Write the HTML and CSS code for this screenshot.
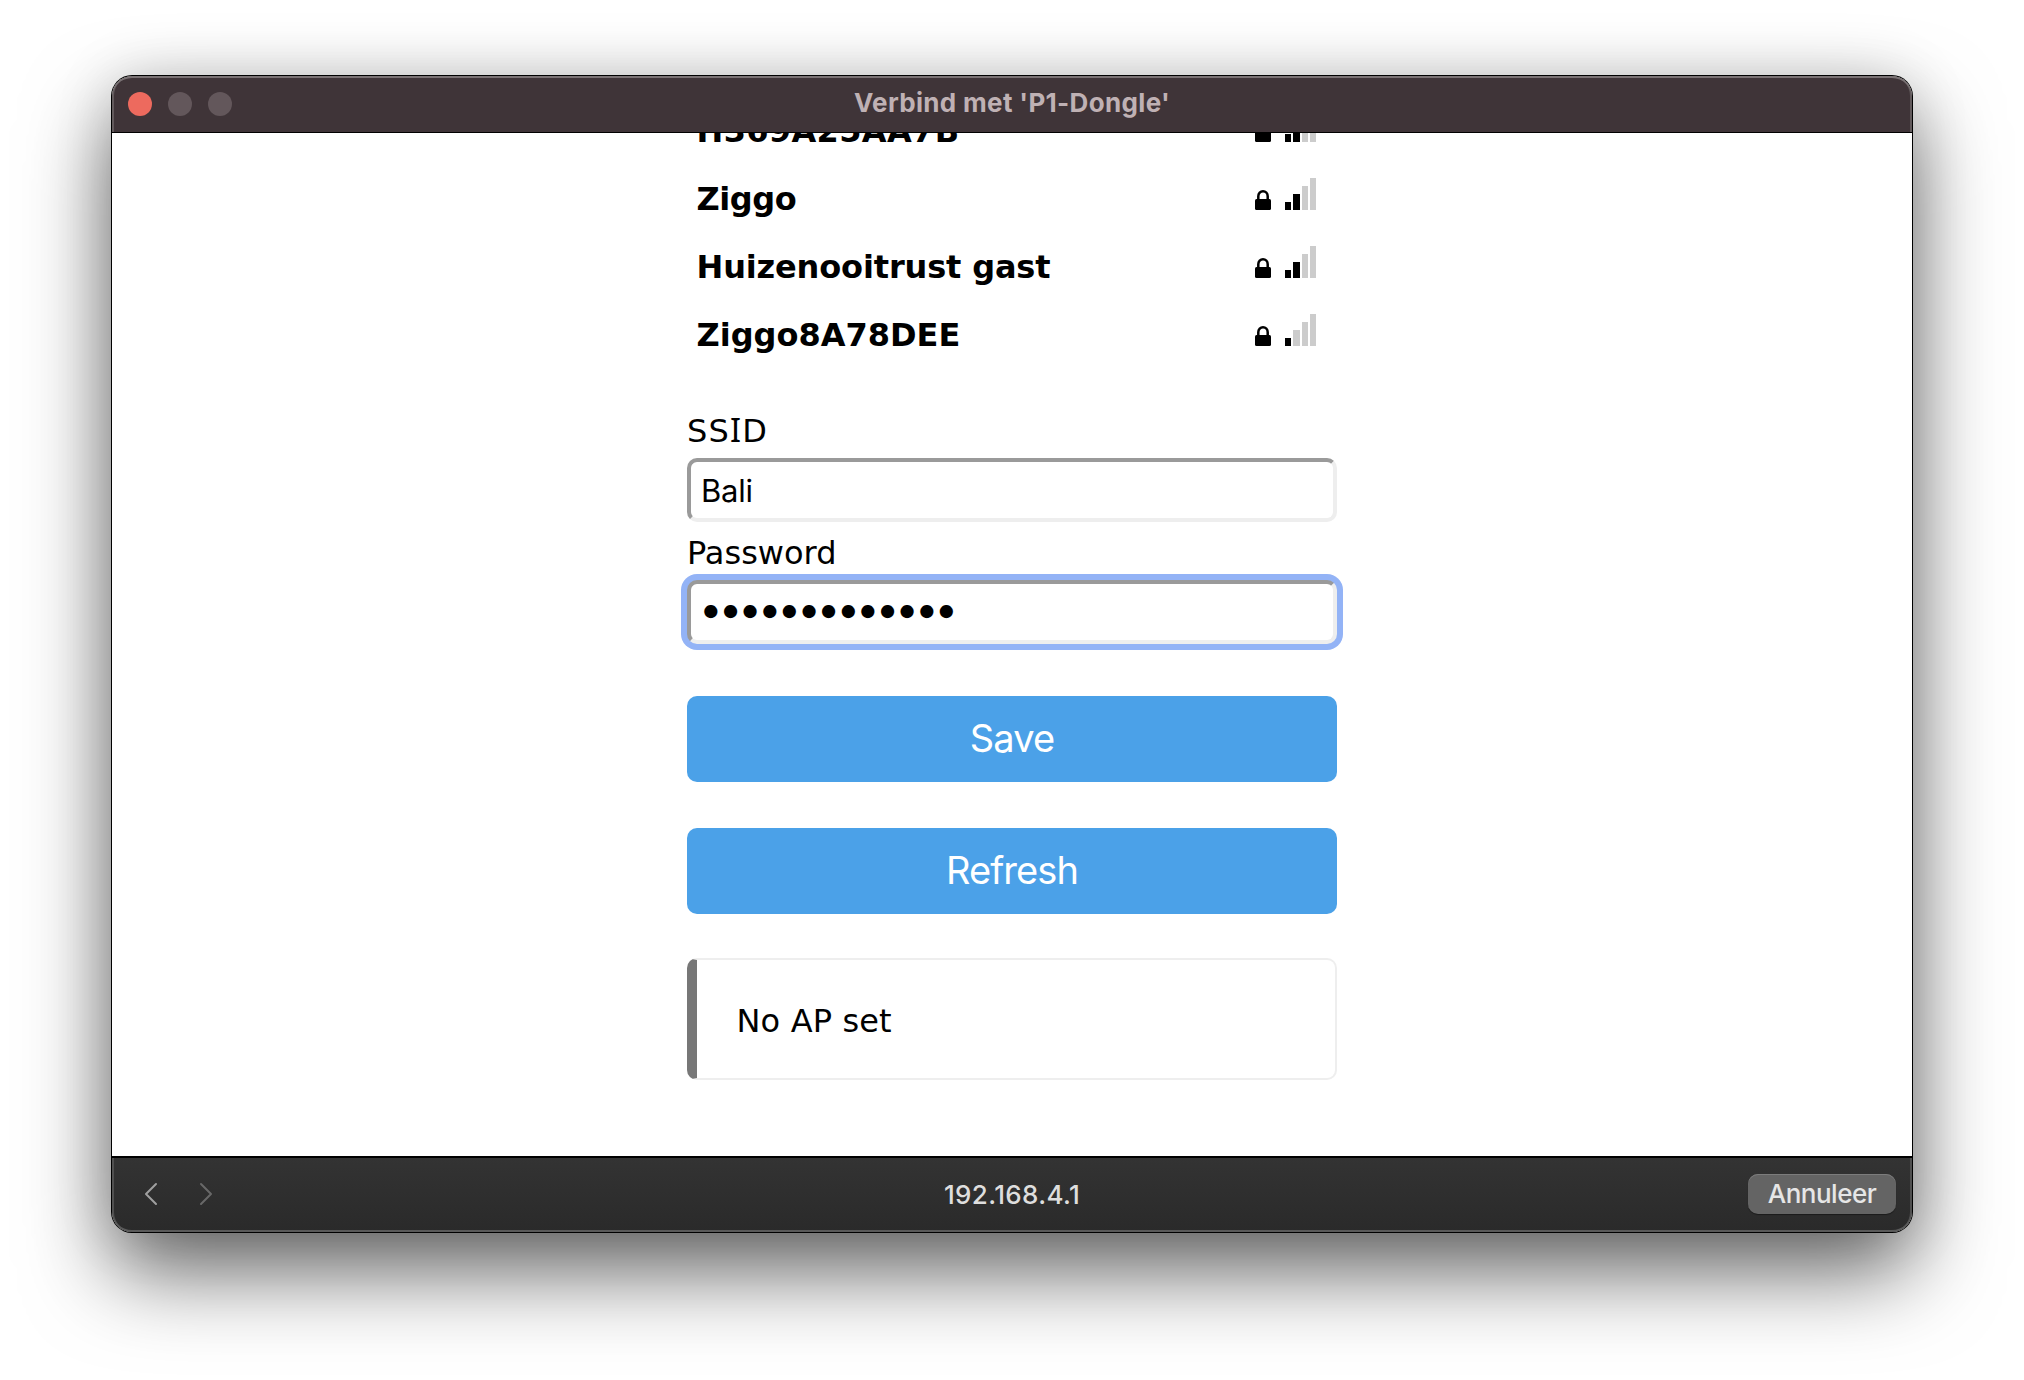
FILE: index.html
```html
<!DOCTYPE html>
<html lang="nl">
<head>
<meta charset="utf-8">
<title>Verbind met 'P1-Dongle'</title>
<link rel="stylesheet" href="styles.css">
</head>
<body>
<svg class="defs" width="0" height="0" aria-hidden="true">
  <symbol id="lock" viewBox="0 0 16 20">
    <path d="M3.3 10V6.2a4.7 4.9 0 0 1 9.4 0V10" fill="none" stroke="#000" stroke-width="2.5"/>
    <rect x="0" y="9" width="16" height="11" rx="1.5"/>
  </symbol>
</svg>
<main class="window">
  <header class="titlebar">
    <div class="lights"><i class="light close"></i><i class="light"></i><i class="light"></i></div>
    <h1 class="title">Verbind met 'P1-Dongle'</h1>
  </header>
  <section class="content">
    <div class="column">
      <ul class="networks">
        <li class="network"><span class="name-wide">H369A25AA7B</span><span class="status"><svg class="lock"><use href="#lock"/></svg><span class="bars q2"><i></i><i></i><i></i><i></i></span></span></li>
        <li class="network"><span class="name-tight">Ziggo</span><span class="status"><svg class="lock"><use href="#lock"/></svg><span class="bars q2"><i></i><i></i><i></i><i></i></span></span></li>
        <li class="network"><span class="name-snug">Huizenooitrust gast</span><span class="status"><svg class="lock"><use href="#lock"/></svg><span class="bars q2"><i></i><i></i><i></i><i></i></span></span></li>
        <li class="network"><span>Ziggo8A78DEE</span><span class="status"><svg class="lock"><use href="#lock"/></svg><span class="bars q1"><i></i><i></i><i></i><i></i></span></span></li>
      </ul>
      <label class="label first" for="s">SS<span class="serif-i">I</span>D</label>
      <input class="field" id="s" value="Bali">
      <label class="label" for="p">Password</label>
      <input class="field focused" id="p" type="password" value="1234567890123">
      <button class="action save">Save</button>
      <button class="action refresh">Refresh</button>
      <div class="notice">No AP set</div>
    </div>
  </section>
  <footer class="toolbar">
    <div class="nav">
      <svg width="14" height="24" viewBox="0 0 14 24"><path d="M12 2 2 12l10 10" fill="none" stroke="#a0a0a0" stroke-width="2" stroke-linecap="round" stroke-linejoin="round"/></svg>
      <svg width="14" height="24" viewBox="0 0 14 24"><path d="m2 2 10 10L2 22" fill="none" stroke="#686868" stroke-width="2" stroke-linecap="round" stroke-linejoin="round"/></svg>
    </div>
    <div class="address">192.168.4.1</div>
    <button class="cancel">Annuleer</button>
  </footer>
</main>
</body>
</html>
```
FILE: styles.css
```css
* { box-sizing: border-box; }
body { margin: 0; width: 2024px; height: 1380px; overflow: hidden; background: #fff; padding: 76px 112px; }
.defs { display: block; position: absolute; }
.window {
  width: 1800px; height: 1156px; border-radius: 20px; overflow: hidden;
  display: flex; flex-direction: column; background: #fff;
  box-shadow: 0 0 0 1px #000, 0 40px 86px rgba(0,0,0,.6), 0 0 60px rgba(0,0,0,.13);
}
.titlebar {
  height: 57px; flex: none; display: grid; grid-template-columns: 1fr auto 1fr; align-items: center;
  background: #3f3438; border-bottom: 1px solid #000; border-radius: 20px 20px 0 0; padding: 0 16px;
  box-shadow: inset 0 2px #7a7274, inset 2px 0 #625a5c, inset -2px 0 #625a5c;
}
.lights { display: flex; gap: 16px; }
.light { width: 24px; height: 24px; border-radius: 50%; background: #63575b; }
.light.close { background: #ed6a5e; }
.title { margin: 0 0 2px; font: 700 26px/32px Inter, sans-serif; letter-spacing: .33px; color: #bfb1b4; }
.content { flex: 1; overflow: hidden; display: flex; justify-content: center; align-items: flex-start; }
.column { width: 650px; display: flex; flex-direction: column; margin-top: -36px; font: 32px/40px "DejaVu Sans", sans-serif; color: #000; }
.networks { list-style: none; margin: 0; padding: 0 21px 0 9.5px; }
.network { height: 68px; line-height: 68px; font-weight: 700; display: flex; justify-content: space-between; white-space: nowrap; }
.name-wide { letter-spacing: .35px; }
.name-tight { letter-spacing: -.45px; }
.name-snug { letter-spacing: -.15px; }
.status { display: flex; align-items: flex-end; gap: 14px; height: 45px; }
.lock { width: 16px; height: 20px; display: block; }
.bars { display: flex; align-items: flex-end; gap: 2px; height: 32px; }
.bars i { width: 6.25px; height: 8px; background: #ccc; }
.bars i:nth-child(2) { height: 16px; }
.bars i:nth-child(3) { height: 24px; }
.bars i:nth-child(4) { height: 32px; }
.bars i:nth-child(1), .q2 i:nth-child(2) { background: #000; }
.label { margin: 11px 0 7px; height: 40px; line-height: 40px; }
.label.first { margin-top: 42px; letter-spacing: 1.2px; }
.serif-i { font: 32.6px/30px "Noto Sans", sans-serif; }
.field {
  width: 650px; height: 64px; border: 4px solid; border-color: #9a9a9a #eee #eee #9a9a9a; border-radius: 10px;
  background: #fff; padding: 0 10px; font: 31px/40px Inter, sans-serif; letter-spacing: -.2px; color: #000; margin: 0; outline: none;
}
.field.focused { box-shadow: 0 0 0 6px #93b3f6; font-size: 42px; letter-spacing: -4px; padding: 0 8px 7px; }
.action { height: 86px; border: 0; border-radius: 10px; background: #4ba1e8; color: #fff; font: 38px/48px Inter, sans-serif; letter-spacing: -.9px; padding: 0 0 2px; }
.save { margin-top: 52px; }
.refresh { margin-top: 46px; }
.notice { margin-top: 44px; height: 122px; border: 2px solid #eee; border-left: 10px solid #777; border-radius: 10px; padding: 41px 39.5px 0; letter-spacing: .15px; }
.toolbar {
  height: 76px; flex: none; display: grid; grid-template-columns: 1fr auto 1fr; align-items: center;
  border-top: 2px solid #000; background: linear-gradient(#333, #2a2a2a); border-radius: 0 0 20px 20px; padding: 0 16px;
  box-shadow: inset 0 -2px #5a5a5a, inset 2px 0 #505050, inset -2px 0 #505050;
}
.nav { display: flex; gap: 41px; margin: 0 0 2px 16px; }
.address { font: 500 26px/32px Inter, sans-serif; letter-spacing: .35px; color: #dedede; }
.cancel {
  justify-self: end; width: 148px; height: 40px; border: 0; border-radius: 10px; padding: 0 0 1px; margin-bottom: 2px;
  background: #646464; box-shadow: inset 0 1px #7c7c7c, 0 1px 1px rgba(0,0,0,.4); color: #e6e6e6; font: 500 26px/32px Inter, sans-serif; letter-spacing: -.5px;
}
```
